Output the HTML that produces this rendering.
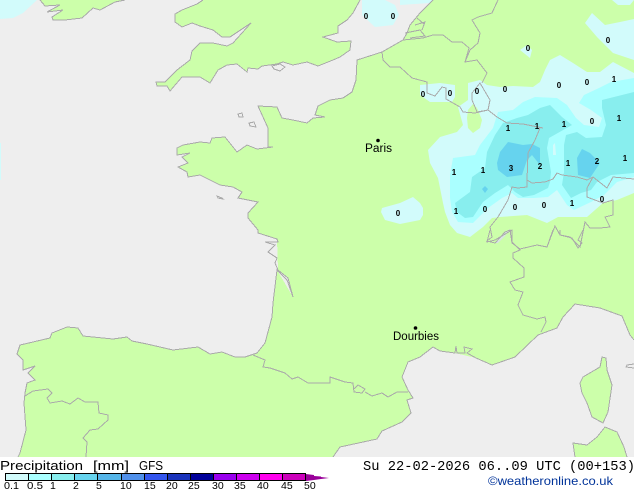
<!DOCTYPE html>
<html><head><meta charset="utf-8"><style>
html,body{margin:0;padding:0;background:#fff}
svg{display:block}
text{font-family:"Liberation Sans",sans-serif}
.c{fill:none;stroke:#aaa;stroke-width:1}
.n{font:bold 8px "Liberation Sans",sans-serif;fill:#000;text-anchor:middle}
.l{font-size:10.5px;fill:#000}
.t{font-size:12.5px;fill:#000}
</style></head><body>
<svg width="634" height="490" viewBox="0 0 634 490" xmlns="http://www.w3.org/2000/svg">
<rect width="634" height="490" fill="#fff"/>
<rect width="634" height="457" fill="#eee"/>
<g shape-rendering="crispEdges">
<!-- land -->
<g fill="#ccffaa">
<path d="M40,0L45,6L60,5L47,12L63,10L52,17L53,20L65,20L82,18L93,8L100,10L115,2L125,0Z"/>
<path d="M203,0L197,4L182,10L175,14L175,22L182,27L192,23L200,26L213,30L222,37L230,37L251,23L233,43L227,46L213,43L200,43L192,51L190,60L177,70L165,82L156,82L157,86L167,86L170,91L182,77L200,77L210,83L218,70L227,65L237,64L247,72L248,68L258,69L262,66L277,64L283,62L293,65L307,62L318,66L333,60L340,57L350,50L351,41L337,42L323,37L338,33L338,26L347,20L353,13L360,0Z"/>
<path d="M433,0L420,13L410,25L407,33L403,40L382,52L357,60L356,80L352,92L343,98L330,100L318,106L315,115L325,117L313,118L307,123L293,120L282,118L277,107L258,106L263,117L268,128L268,147L273,147L257,149L247,145L237,152L225,137L212,138L210,143L200,142L183,145L177,148L177,155L190,153L182,157L188,163L178,167L187,172L188,177L200,175L220,185L233,187L242,192L238,198L258,202L248,213L248,218L258,230L258,233L277,239L278,270L288,278L293,297L277,270L273,303L272,317L265,343L257,353L245,357L235,357L222,352L210,354L198,347L173,350L147,344L132,341L127,337L113,339L93,337L83,336L78,328L67,327L52,333L50,338L33,342L20,345L17,354L23,360L23,370L35,366L28,373L35,380L27,383L25,393L24,403L26,430L20,453L18,457L333,457L340,447L377,439L382,431L402,422L411,413L407,400L413,398L408,390L402,377L408,362L420,357L433,347L440,351L455,353L476,358L492,365L515,357L538,335L557,328L563,317L575,304L600,308L622,316L630,335L634,340L634,0Z"/>
<path d="M602,357L606,358L607,370L612,385L608,412L603,423L592,417L587,403L582,393L580,383L583,377L600,367Z"/>
<path d="M605,427L617,432L624,447L627,457L575,457L573,443L587,445L597,437Z"/>
</g>
</g>
<!-- precip -->
<g fill="#d2fbfb">
<path d="M0,0L37,0L23,13L13,18L0,19Z"/>
<path d="M0,143L1,143L1,180L0,180Z"/>
<path d="M362,0L362,15L375,27L393,25L399,15L395,5L385,0Z"/>
<path d="M400,5L430,3L433,0L400,0Z"/>
<path d="M612,0L618,5L630,5L634,0Z"/>
<path d="M585,23L592,13L605,25L620,22L634,19L634,60L613,53L597,37Z"/>
<path d="M527,45L532,50L530,58L520,50Z"/>
<path d="M420,85L440,83L455,85L455,97L452,102L430,102L420,95Z"/>
<path d="M382,208L400,203L413,197L420,203L423,208L423,215L420,220L400,224L385,220L381,212Z"/>
<path d="M634,73L613,62L600,72L587,72L573,63L560,55L550,60L545,70L540,82L533,87L513,86L500,87L487,85L480,80L468,83L468,100L458,107L463,125L457,132L440,137L428,150L430,163L438,178L440,188L443,203L445,212L450,225L457,233L470,237L483,227L492,218L500,217L527,215L547,223L558,217L587,217L603,203L617,200L634,193Z"/>
</g>
<path fill="#ccffaa" d="M468,110L473,104L477,108L482,120L480,128L473,133L468,128L467,118Z"/>
<path fill="#aaffff" d="M498,112L513,110L523,102L535,97L557,98L567,105L576,118L584,125L599,127L602,118L591,110L579,103L584,95L599,88L611,82L634,78L634,177L617,182L604,195L591,202L574,210L567,205L557,190L548,197L534,198L523,198L518,198L512,193L502,198L488,208L473,223L458,222L452,212L450,198L450,175L453,158L475,155L480,145L493,128Z"/>
<path fill="#88eeee" d="M503,123L517,118L528,115L540,108L550,105L562,117L572,125L549,138L547,148L551,172L550,182L548,188L534,195L523,197L515,192L508,185L495,193L483,202L473,217L465,218L457,212L455,203L470,192L472,177L485,168L487,152L495,135Z"/>
<path fill="#88eeee" d="M602,100L614,97L634,92L634,173L611,175L597,182L591,190L581,193L571,198L562,185L564,172L564,145L566,135L577,132L586,138L602,137L606,125L602,108Z"/>
<g fill="#66d3ee">
<path d="M497,163L500,152L508,142L523,145L532,144L540,148L540,165L532,155L527,160L522,175L507,177L498,170Z"/>
<path d="M482,189L485,186L488,189L485,193Z"/>
<path d="M577,158L582,149L590,153L600,163L590,178L578,175Z"/>
</g>
<path fill="#d2fbfb" d="M553,145L555,143L556,155L553,155Z"/>
<path fill="#d8e4e4" d="M495,243L505,232L510,229L505,236L498,243Z"/>
<g shape-rendering="crispEdges">
<!-- coasts & borders -->
<g class="c">
<path d="M40,0L45,6L60,5L47,12L63,10L52,17L53,20L65,20L82,18L93,8L100,10L115,2L125,0"/>
<path d="M203,0L197,4L182,10L175,14L175,22L182,27L192,23L200,26L213,30L222,37L230,37L251,23L233,43L227,46L213,43L200,43L192,51L190,60L177,70L165,82L156,82L157,86L167,86L170,91L182,77L200,77L210,83L218,70L227,65L237,64L247,72L248,68L258,69L262,66L277,64L283,62L293,65L307,62L318,66L333,60L340,57L350,50L351,41L337,42L323,37L338,33L338,26L347,20L353,13L360,0"/>
<path d="M433,0L420,13L410,25L407,33L403,40L382,52L357,60L356,80L352,92L343,98L330,100L318,106L315,115L325,117L313,118L307,123L293,120L282,118L277,107L258,106L263,117L268,128L268,147L273,147L257,149L247,145L237,152L225,137L212,138L210,143L200,142L183,145L177,148L177,155L190,153L182,157L188,163L178,167L187,172L188,177L200,175L220,185L233,187L242,192L238,198L258,202L248,213L248,218L258,230L258,233L277,239L278,242L265,242L275,245L268,252L277,258L275,263L278,270L288,278L293,297L287,280L277,270L273,303L272,317L265,343L257,353L245,357L235,357L222,352L210,354L198,347L173,350L147,344L132,341L127,337L113,339L93,337L83,336L78,328L67,327L52,333L50,338L33,342L20,345L17,354L23,360L23,370L35,366L28,373L35,380L27,383L25,393L24,403L26,430L20,453L18,457"/>
<path d="M333,457L340,447L377,439L382,431L402,422L411,413L407,400L413,398L408,390L402,377L408,362L420,357L433,347L440,351L455,353L456,346L457,353L465,353L464,347L472,349L467,353L476,358L492,365L515,357L538,335L557,328L563,317L575,304L600,308L622,316L630,335L634,340"/>
<path d="M602,357L606,358L607,370L612,385L608,412L603,423L592,417L587,403L582,393L580,383L583,377L600,367Z"/>
<path d="M627,457L624,447L617,432L605,427L597,437L587,445L573,443L575,457"/>
<path d="M634,364L627,365L626,367L634,368"/>
<path d="M238,114L242,113L243,117L239,117Z"/>
<path d="M249,123L254,122L256,127L250,126Z"/>
<path d="M217,196L222,198L223,199L218,198Z"/>
<path d="M272,66L280,64L285,67L280,71L274,69Z"/>
<path d="M253,355L265,360L263,367L270,368L285,373L292,379L298,377L308,383L320,383L330,383L330,377L345,382L353,383L354,392L362,393L365,389L358,385L354,389M365,392L372,396L382,393L388,397L397,392L408,392"/>
<path d="M25,396L33,391L48,389L52,393L47,398L50,403L62,401L70,404L78,398L85,402L98,402L99,413L108,415L108,420L98,429L90,430L83,438L87,442L86,457"/>
<path d="M382,52L383,60L390,67L400,67L412,78L427,82L427,93L435,96L442,87L446,88L446,99L460,107L463,112L475,113L488,110L497,117L507,123L523,124L538,127L543,128"/>
<path d="M540,128L535,140L528,153L527,180L532,183L545,182L553,179L557,173L562,175L577,177L587,180L593,177L607,188L613,177L634,179"/>
<path d="M527,180L527,187L518,188L512,187L508,200L498,217L490,227L492,237L487,241L495,243L505,232L510,230L512,243L520,249L537,245L547,247L555,226L560,235L570,237L580,247L585,222L590,228L600,228L610,227L605,217L613,215L613,200L603,203L587,197L587,188L593,177"/>
<path d="M490,230L487,242L495,240L512,230L512,242L520,250L513,253L513,258L524,268L524,277L510,282L515,290L523,292L518,305L523,315L537,319L545,317L546,322L541,332"/>
<path d="M553,230L547,247M560,230L560,235L572,238L578,248L582,243L578,240L583,230"/>
<path d="M480,83L472,93L472,100L475,107L477,112L488,110L490,100Z"/>
<path d="M498,0L492,13L478,17L472,20L480,33L478,43L470,50L465,62L477,60L487,73L482,83"/>
<path d="M403,40L423,38L433,35L443,35L452,42L462,42L469,48L465,62"/>
<path d="M405,33L420,30L425,36L410,38M415,25L425,22L422,30M417,18L424,24"/>
</g>
</g>
<!-- labels -->
<g class="n">
<text x="366" y="19">0</text><text x="393" y="19">0</text><text x="398" y="216">0</text>
<text x="528" y="51">0</text><text x="608" y="43">0</text><text x="559" y="88">0</text><text x="587" y="85">0</text><text x="614" y="82">1</text>
<text x="423" y="97">0</text><text x="450" y="96">0</text><text x="477" y="94">0</text><text x="505" y="92">0</text>
<text x="592" y="124">0</text><text x="619" y="121">1</text><text x="564" y="127">1</text><text x="537" y="129">1</text><text x="508" y="131">1</text>
<text x="454" y="175">1</text><text x="483" y="173">1</text><text x="511" y="171">3</text><text x="540" y="169">2</text><text x="568" y="166">1</text><text x="597" y="164">2</text><text x="625" y="161">1</text>
<text x="456" y="214">1</text><text x="485" y="212">0</text><text x="515" y="210">0</text><text x="544" y="208">0</text><text x="572" y="206">1</text><text x="602" y="202">0</text>
</g>
<circle cx="378" cy="140.500" r="1.800" fill="#000"/>
<circle cx="415.500" cy="328" r="1.800" fill="#000"/>
<text x="365" y="152" font-size="11.500" textLength="27" lengthAdjust="spacingAndGlyphs" fill="#000">Paris</text>
<text x="393" y="340" font-size="11.500" textLength="46" lengthAdjust="spacingAndGlyphs" fill="#000">Dourbies</text>
<!-- bottom -->
<text class="t" x="0" y="470" textLength="83" lengthAdjust="spacingAndGlyphs">Precipitation</text>
<text class="t" x="93" y="470" textLength="36" lengthAdjust="spacingAndGlyphs">[mm]</text>
<text class="t" x="139" y="470" textLength="24" lengthAdjust="spacingAndGlyphs">GFS</text>
<g shape-rendering="crispEdges">
<rect x="5" y="473" width="23" height="8" fill="#d2fbfb"/>
<rect x="28" y="473" width="23" height="8" fill="#aaffff"/>
<rect x="51" y="473" width="23" height="8" fill="#88eeee"/>
<rect x="74" y="473" width="23" height="8" fill="#66d3ee"/>
<rect x="97" y="473" width="24" height="8" fill="#55b5e8"/>
<rect x="121" y="473" width="23" height="8" fill="#5090ea"/>
<rect x="144" y="473" width="23" height="8" fill="#3355ee"/>
<rect x="167" y="473" width="23" height="8" fill="#1a33bb"/>
<rect x="190" y="473" width="23" height="8" fill="#000099"/>
<rect x="213" y="473" width="23" height="8" fill="#9900ee"/>
<rect x="236" y="473" width="23" height="8" fill="#cc00ee"/>
<rect x="259" y="473" width="23" height="8" fill="#ff00ee"/>
<rect x="282" y="473" width="23" height="8" fill="#cc00bb"/>
<path d="M5.500,473.500H305.500V480.500H5.500ZM28.500,473.500V480.500M51.500,473.500V480.500M74.500,473.500V480.500M97.500,473.500V480.500M121.500,473.500V480.500M144.500,473.500V480.500M167.500,473.500V480.500M190.500,473.500V480.500M213.500,473.500V480.500M236.500,473.500V480.500M259.500,473.500V480.500M282.500,473.500V480.500" fill="none" stroke="#000"/>
</g>
<path d="M306,474L314,475L314,476L321,476.500L321,477L329,478L321,479L314,480L306,481Z" fill="#990099"/>
<g class="l">
<text x="4" y="489" textLength="15" lengthAdjust="spacingAndGlyphs">0.1</text>
<text x="27" y="489" textLength="16" lengthAdjust="spacingAndGlyphs">0.5</text>
<text x="50" y="489">1</text>
<text x="73" y="489">2</text>
<text x="96" y="489">5</text>
<text x="120" y="489">10</text>
<text x="144" y="489">15</text>
<text x="166" y="489">20</text>
<text x="188" y="489">25</text>
<text x="212" y="489">30</text>
<text x="234" y="489">35</text>
<text x="257" y="489">40</text>
<text x="281" y="489">45</text>
<text x="304" y="489">50</text>
</g>
<text x="363" y="470" style="font-family:'Liberation Mono',monospace" font-size="13.600" fill="#000" textLength="272" lengthAdjust="spacingAndGlyphs">Su 22-02-2026 06..09 UTC (00+153)</text>
<text x="488" y="485" font-size="12" fill="#003399" textLength="125" lengthAdjust="spacingAndGlyphs">©weatheronline.co.uk</text>
</svg>
</body></html>
